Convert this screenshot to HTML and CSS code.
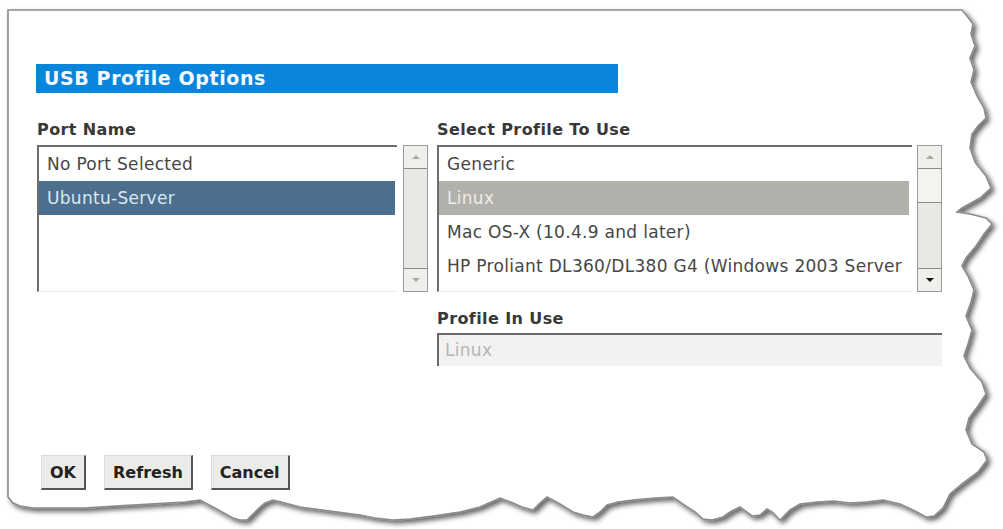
FILE: index.html
```html
<!DOCTYPE html>
<html lang="en">

<head>
  <meta charset="UTF-8">
  <title>USB Profile Options</title>
  <link rel="stylesheet" href="styles.css">
</head>

<body>
  <div class="sheet">
    <!-- torn paper edge behind the dialog -->
    <svg class="tear" width="1003" height="529" viewBox="0 0 1003 529">
      <defs>
        <filter id="shade" x="-5%" y="-5%" width="110%" height="115%">
          <feDropShadow dx="3" dy="3" stdDeviation="2.5" flood-color="#000" flood-opacity="0.6"/>
        </filter>
      </defs>
      <path filter="url(#shade)" fill="#fff" stroke="#8b8b8b" stroke-width="1.6"
        d="M8 10 H962 L967 16 973 24 971 34 975 46 970 58 974 70 971 82 977 96 984 108 986 118 978 126 972 134 970 148 975 162 986 176 991 188 980 198 962 208 957 212 970 214 986 218 992 224 984 234 976 246 966 258 962 266 968 276 974 290 971 302 966 316 972 330 968 344 964 356 970 368 982 382 986 394 978 406 969 418 966 430 972 444 984 452 987 460 978 472 962 484 950 494 943 508 934 516 926 517 915 511 900 504 883 500 866 502 850 503 834 501 817 502 800 504 790 510 780 520 772 512 767 509 760 515 752 516 740 507 730 512 723 517 712 520 703 519 695 512 687 507 673 497 655 498 633 500 618 502 607 505 600 512 593 517 583 515 573 512 560 504 547 497 540 503 533 510 522 507 513 503 500 498 480 507 460 512 433 516 410 519 393 520 375 518 360 515 330 511 300 507 285 503 273 500 265 503 260 507 253 514 247 520 240 520 233 518 222 512 213 507 200 500 185 502 167 503 150 504 133 505 115 506 100 507 85 508 67 508 50 508 33 508 20 506 13 503 8 497 Z"/>
    </svg>

    <div class="content">
      <div class="title">USB Profile Options</div>

      <div class="cols">
        <div class="col">
          <div class="label">Port Name</div>
          <div class="listbox">
            <div class="list">
              <div class="row">No Port Selected</div>
              <div class="row sel-port">Ubuntu-Server</div>
            </div>
            <div class="scroll">
              <div class="sbtn up"><span class="arrow-up off"></span></div>
              <div class="sbtn down"><span class="arrow-down off"></span></div>
            </div>
          </div>
        </div>

        <div class="col">
          <div class="label">Select Profile To Use</div>
          <div class="listbox">
            <div class="list">
              <div class="row">Generic</div>
              <div class="row sel-profile">Linux</div>
              <div class="row">Mac OS-X (10.4.9 and later)</div>
              <div class="row">HP Proliant DL360/DL380 G4 (Windows 2003 Server</div>
            </div>
            <div class="scroll right">
              <div class="sbtn up"><span class="arrow-up off"></span></div>
              <div class="thumb"></div>
              <div class="sbtn down"><span class="arrow-down"></span></div>
            </div>
          </div>

          <div class="label in-use">Profile In Use</div>
          <div class="field">Linux</div>
        </div>
      </div>

      <div class="actions">
        <button class="btn">OK</button>
        <button class="btn">Refresh</button>
        <button class="btn">Cancel</button>
      </div>
    </div>
  </div>
</body>
</html>
```

FILE: styles.css
```css
body{
	margin:0;
	background:#fff;
	font-family:"DejaVu Sans","Liberation Sans",sans-serif;
}
.sheet{
	position:relative;
	width:1003px;
	height:529px;
	overflow:hidden;
}
.tear{
	position:absolute;
	top:0;
	left:0;
}
.content{
	position:relative;
	padding:64px 0 0 36px;
}
.title{
	width:582px;
	height:29px;
	box-sizing:border-box;
	padding-left:8px;
	background:#0a85dc;
	color:#f4f9ff;
	font-size:19px;
	font-weight:bold;
	letter-spacing:0.6px;
	line-height:29px;
}
.cols{
	display:grid;
	grid-template-columns:391px 505px;
	column-gap:9px;
	margin:27px 0 0 1px;
}
.label{
	height:20px;
	margin-bottom:5px;
	color:#383838;
	font-size:16px;
	font-weight:bold;
	letter-spacing:0.4px;
	line-height:20px;
}
.label.in-use{
	margin-top:17px;
	margin-bottom:4px;
}
.listbox{
	display:flex;
	height:147px;
}
.list{
	flex:1;
	overflow:hidden;
	border-top:2px solid #6e6e6e;
	border-left:2px solid #6e6e6e;
	border-bottom:1px solid #e6e6e6;
	background:#fff;
}
.row{
	height:34px;
	padding-left:8px;
	color:#464646;
	font-size:17px;
	letter-spacing:0.3px;
	line-height:34px;
	white-space:nowrap;
}
.row.sel-port{
	margin-right:2px;
	background:#4b6f8d;
	color:#dce7f1;
}
.row.sel-profile{
	margin-right:3px;
	background:#b2b0aa;
	color:#ececec;
}
.scroll{
	display:flex;
	flex-direction:column;
	width:25px;
	box-sizing:border-box;
	margin-left:6px;
	border:1px solid #9a9a9a;
	background:#e8e8e4;
}
.scroll.right{
	margin-left:5px;
}
.sbtn{
	display:flex;
	align-items:center;
	justify-content:center;
	height:22px;
	background:#efefeb;
	border-bottom:1px solid #8a8a8a;
}
.sbtn.down{
	margin-top:auto;
	border-top:1px solid #8a8a8a;
	border-bottom:none;
}
.thumb{
	height:33px;
	background:#f3f3ef;
	border-bottom:1px solid #8a8a8a;
}
.arrow-up,.arrow-down{
	width:0;
	height:0;
	border-left:4px solid transparent;
	border-right:4px solid transparent;
}
.arrow-up{
	border-bottom:4px solid #111;
}
.arrow-down{
	border-top:4px solid #111;
}
.arrow-up.off{
	border-bottom-color:#a8a8a8;
}
.arrow-down.off{
	border-top-color:#a8a8a8;
}
.field{
	height:33px;
	box-sizing:border-box;
	padding-left:6px;
	border-top:2px solid #6a6a6a;
	border-left:2px solid #6a6a6a;
	background:#f2f2f2;
	color:#b5b5b5;
	font-size:17px;
	letter-spacing:0.3px;
	line-height:31px;
}
.actions{
	display:flex;
	gap:18px;
	margin:89px 0 0 5px;
}
.btn{
	height:35px;
	padding:0 8px;
	border:none;
	border-top:1px solid #dcdcdc;
	border-left:1px solid #dcdcdc;
	border-right:2px solid #555;
	border-bottom:2px solid #555;
	background:#ebebe9;
	color:#222;
	font-family:"DejaVu Sans","Liberation Sans",sans-serif;
	font-size:16px;
	font-weight:bold;
}
```
